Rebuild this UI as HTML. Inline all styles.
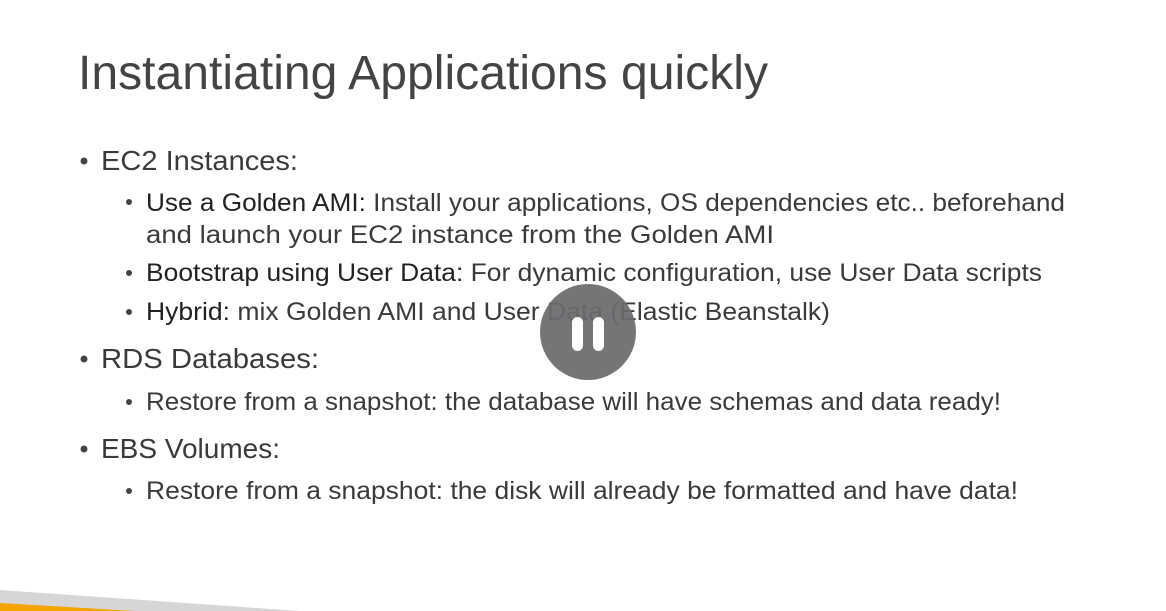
<!DOCTYPE html>
<html><head><meta charset="utf-8"><style>
html,body{margin:0;padding:0;background:#fff;width:1166px;height:611px;overflow:hidden}
svg{display:block}
text{font-family:"Liberation Sans",sans-serif;fill:#3a3a3a}
.t{fill:#444}
</style></head><body>
<svg width="1166" height="611" viewBox="0 0 1166 611" xmlns="http://www.w3.org/2000/svg">
<text class="t" x="78" y="89" font-size="48" textLength="690" lengthAdjust="spacingAndGlyphs">Instantiating Applications quickly</text>

<circle cx="84" cy="161" r="3.5" fill="#444"/>
<text x="101" y="170" font-size="28" textLength="197" lengthAdjust="spacingAndGlyphs">EC2 Instances:</text>

<circle cx="129" cy="202" r="3" fill="#444"/>
<text x="146" y="211" font-size="25" textLength="919" lengthAdjust="spacingAndGlyphs"><tspan style="fill:#222">Use a Golden AMI:</tspan> Install your applications, OS dependencies etc.. beforehand</text>
<text x="146" y="243" font-size="25" textLength="628" lengthAdjust="spacingAndGlyphs">and launch your EC2 instance from the Golden AMI</text>

<circle cx="129" cy="273" r="3" fill="#444"/>
<text x="146" y="281" font-size="25" textLength="896" lengthAdjust="spacingAndGlyphs"><tspan style="fill:#222">Bootstrap using User Data:</tspan> For dynamic configuration, use User Data scripts</text>

<circle cx="129" cy="312" r="3" fill="#444"/>
<text x="146" y="320" font-size="25" textLength="684" lengthAdjust="spacingAndGlyphs"><tspan style="fill:#222">Hybrid:</tspan> mix Golden AMI and User Data (Elastic Beanstalk)</text>

<circle cx="84" cy="359" r="3.5" fill="#444"/>
<text x="101" y="368" font-size="28" textLength="218" lengthAdjust="spacingAndGlyphs">RDS Databases:</text>

<circle cx="129" cy="402" r="3" fill="#444"/>
<text x="146" y="410" font-size="25" textLength="855" lengthAdjust="spacingAndGlyphs">Restore from a snapshot: the database will have schemas and data ready!</text>

<circle cx="84" cy="449" r="3.5" fill="#444"/>
<text x="101" y="458" font-size="28" textLength="179" lengthAdjust="spacingAndGlyphs">EBS Volumes:</text>

<circle cx="129" cy="491" r="3" fill="#444"/>
<text x="146" y="499" font-size="25" textLength="872" lengthAdjust="spacingAndGlyphs">Restore from a snapshot: the disk will already be formatted and have data!</text>

<circle cx="588" cy="332" r="48" fill="#6b6b6e" fill-opacity="0.93"/>
<rect x="572" y="317" width="11" height="34" rx="5.5" fill="#fff"/>
<rect x="593" y="317" width="11" height="34" rx="5.5" fill="#fff"/>

<polygon points="0,590 300,611 0,611" fill="#d6d6d6"/>
<polygon points="0,603 135,611 0,611" fill="#f5a300"/>
</svg>
</body></html>
